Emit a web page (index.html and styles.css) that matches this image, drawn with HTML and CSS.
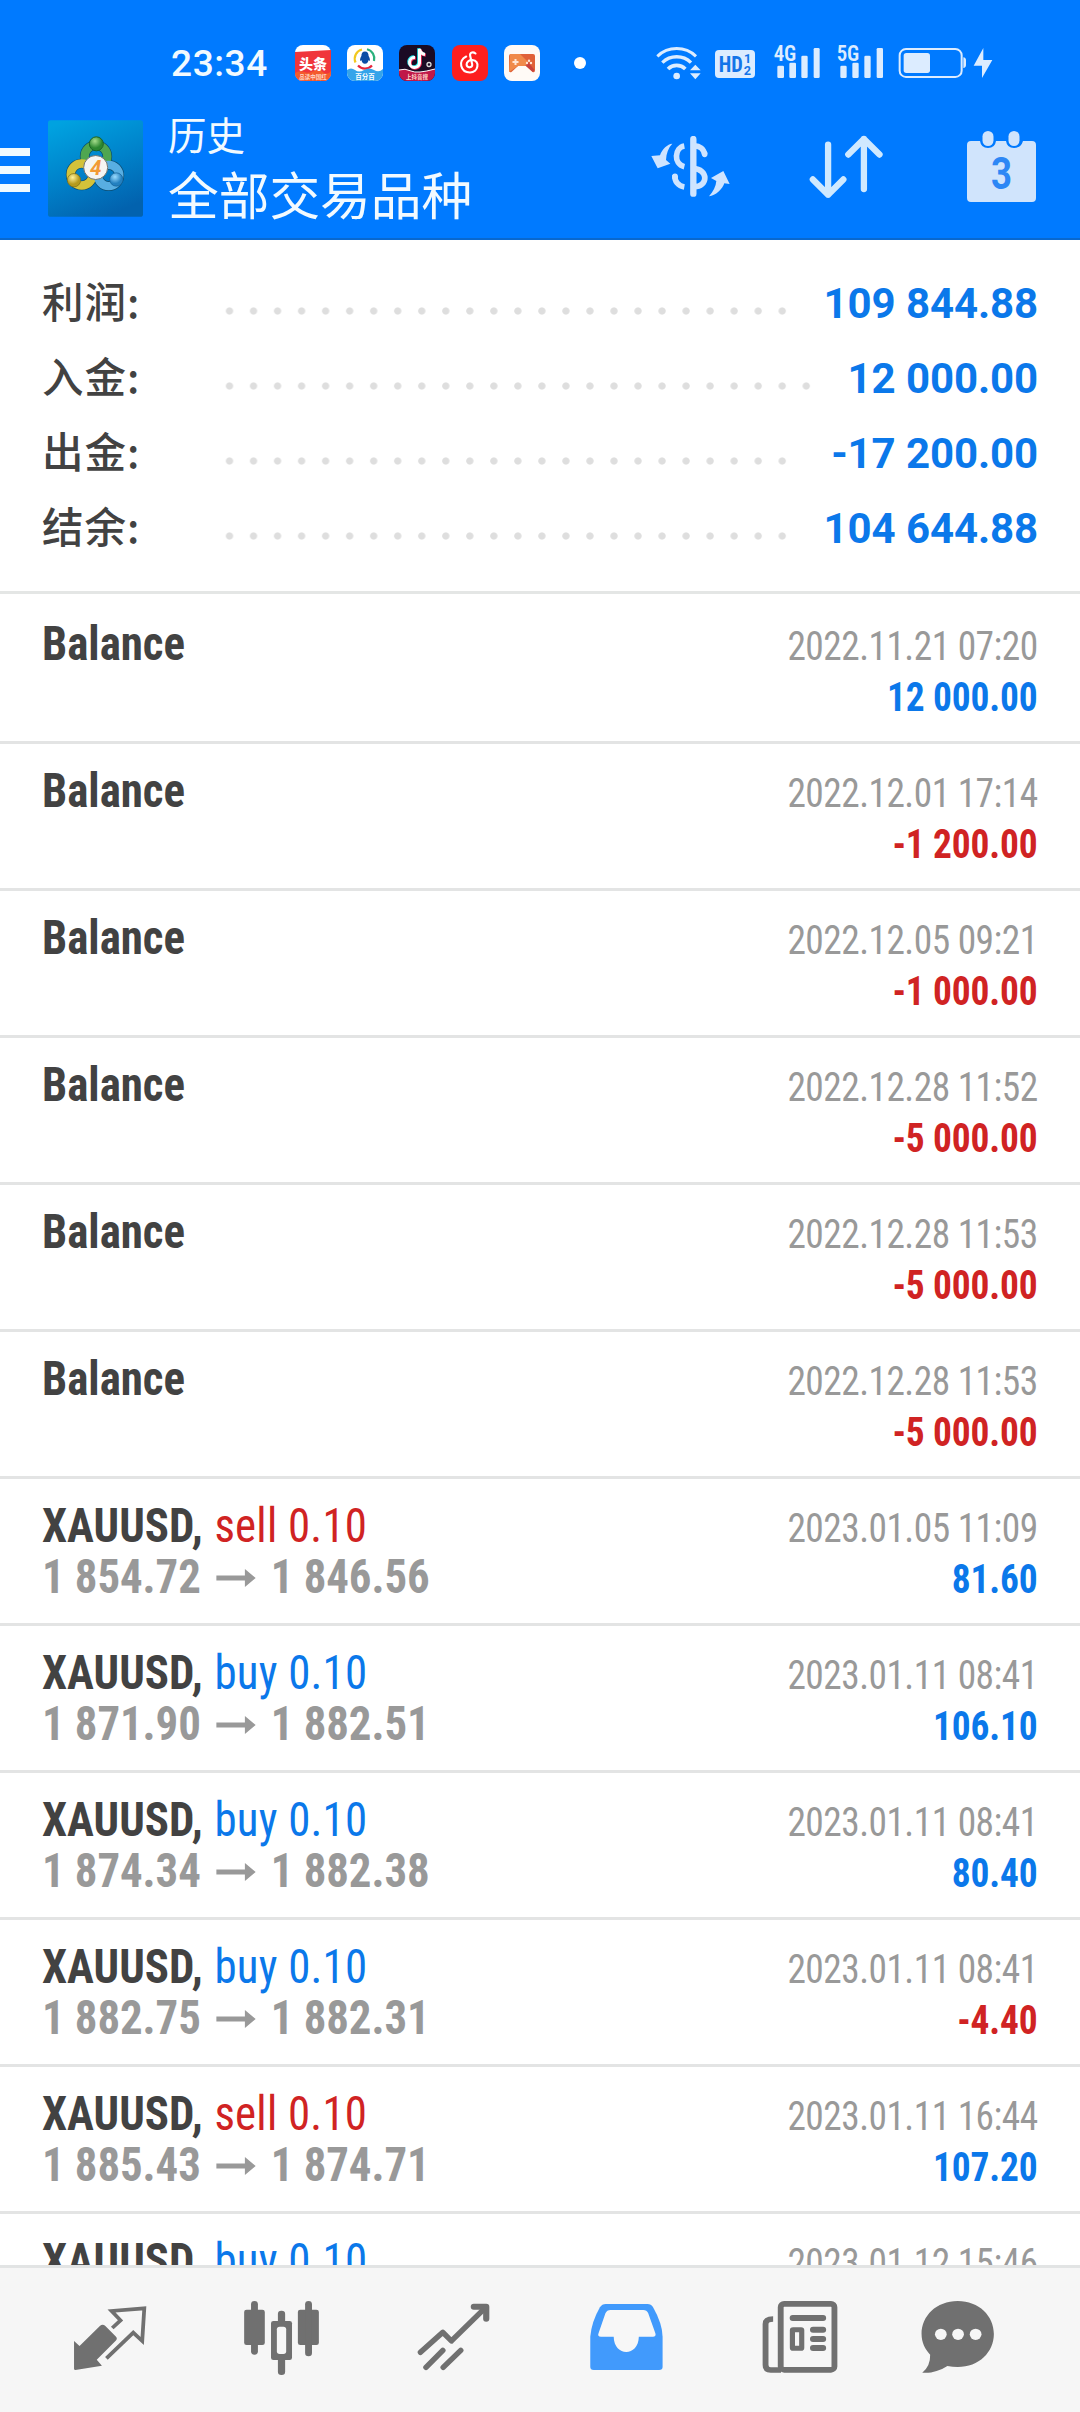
FILE: index.html
```html
<!DOCTYPE html>
<html lang="zh-CN">
<head>
<meta charset="utf-8">
<title>历史</title>
<link rel="stylesheet" href="styles.css">
</head>
<body>
<svg class="defs" aria-hidden="true">
  <symbol id="arrow" viewBox="0 0 42 18"><path d="M0 6.5H30.5V0L42 9 30.500 18V11.500H0z" fill="currentColor"/></symbol>
</svg>
<div class="screen">
  <header class="header">
    <div class="status">
      <span class="clock">23:34</span>
      <div class="apps">
        <svg width="36" height="36" viewBox="0 0 36 36"><rect width="36" height="36" rx="8" fill="#fff"/><path d="M0 7 36 5V28a8 8 0 0 1-8 8H8a8 8 0 0 1-8-8z" fill="#f0353b"/><path d="M0 28Q4 25 9 27T19 26 28 27 36 26V28a8 8 0 0 1-8 8H8a8 8 0 0 1-8-8z" fill="#f45a2c"/><text x="18" y="24" class="app-big">头条</text><text x="18" y="34" class="app-tiny">品读中国红</text></svg>
        <svg width="36" height="36" viewBox="0 0 36 36"><rect width="36" height="36" rx="8" fill="#fff"/><g fill="none" stroke-width="2.200"><path d="M8.500 17.500A9.500 9.500 0 0 1 15 4.500" stroke="#f2c81e"/><path d="M20 4.300A9.500 9.500 0 0 1 27 16" stroke="#2bb17d"/><path d="M11 20.500A9.500 9.500 0 0 0 25 20.500" stroke="#e5263b"/></g><path d="M18 6.500c2.600 0 3.600 2 3.600 4.500 1 1.700 1.800 4 1 5l-1.200-.8c-.3 2-1.300 3.600-3.400 3.600s-3.100-1.600-3.400-3.600l-1.200.8c-.8-1 0-3.300 1-5 0-2.500 1-4.500 3.600-4.500z" fill="#0a4da5"/><path d="M0 25q4-3 8 0t9 0 10 0 9-1v4a8 8 0 0 1-8 8H8a8 8 0 0 1-8-8z" fill="#35a4ea"/><text x="18" y="34" class="app-tiny app-tiny--l">百分百</text></svg>
        <svg width="36" height="36" viewBox="0 0 36 36"><rect width="36" height="36" rx="8" fill="#1b0b24"/><path d="M0 25q6-2 12 1t24-2v4a8 8 0 0 1-8 8H8a8 8 0 0 1-8-8z" fill="#c01848"/><path d="M0 25q6-2 12 1t24-2" fill="none" stroke="#fff"/><g fill="none" stroke-width="3"><path d="M16 12.500a5 5 0 1 0 4.500 5.500V4c.5 3.500 2.500 5 5.500 5.500" stroke="#27e5e8" transform="translate(-.8 -.8)"/><path d="M16 12.500a5 5 0 1 0 4.500 5.500V4c.5 3.500 2.500 5 5.500 5.500" stroke="#f52a5a" transform="translate(.8 .8)"/><path d="M16 12.500a5 5 0 1 0 4.500 5.500V4c.5 3.500 2.500 5 5.500 5.500" stroke="#fff"/></g><circle cx="30" cy="19.500" r="2" fill="none" stroke="#ddd" stroke-width="1.300"/><text x="18" y="34" class="app-tiny">上抖音搜</text></svg>
        <svg width="36" height="36" viewBox="0 0 36 36"><rect width="36" height="36" rx="8" fill="#fd1f1e"/><path d="M23.500 8.500c-3-2.500-6-.5-5.300 2.500l2 8.300c.6 4-5.400 4-5.600.2-.1-3 3-4.700 5.800-4.500 8 .6 6 12.500-2.400 12.500-9.500 0-12.500-12-3.800-16" fill="none" stroke="#fff" stroke-width="2.100" stroke-linecap="round"/></svg>
        <svg width="36" height="36" viewBox="0 0 36 36"><rect width="36" height="36" rx="8" fill="#fffaf6"/><path d="M7 9H29q2 0 2 2V25q0 3-2.500 2L22 21H14L7.500 27Q5 28 5 25V11q0-2 2-2z" fill="#e06038"/><path d="M6 9H16l8 8-3 4h-7L5 27z" fill="#f08a4a"/><path d="M24 17 30.500 25 29 27 22 21z" fill="#c8413e"/><g fill="#ffe5d4"><path d="M10.500 14h2v2h2v2h-2v2h-2v-2h-2v-2h2z"/><circle cx="23" cy="18" r="1.200"/><circle cx="27" cy="18" r="1.200"/><circle cx="25" cy="15.800" r="1.200"/></g></svg>
      </div>
      <span class="more"></span>
      <svg class="signals" width="338" height="36" viewBox="48 27 1014 108">
        <g fill="none" stroke="#dcecff" stroke-width="9"><path d="M52 61a84 84 0 0 1 116 0"/><path d="M67 80a61 61 0 0 1 86 0" stroke-width="10"/><path d="M84 99a37 37 0 0 1 52 0" stroke-width="11"/></g>
        <g fill="#dcecff"><circle cx="110" cy="120" r="10"/><path d="M150 103 166 86 182 103zM150 112H182L166 130z"/>
        <rect x="225" y="42" width="120" height="84" rx="12"/>
        <rect x="412" y="89" width="20" height="37" rx="4"/><rect x="448" y="80" width="20" height="46" rx="4"/><rect x="484" y="59" width="19" height="67" rx="4"/><rect x="521" y="36" width="18" height="90" rx="4"/>
        <rect x="601" y="89" width="19" height="37" rx="4"/><rect x="637" y="80" width="19" height="46" rx="4"/><rect x="673" y="59" width="19" height="67" rx="4"/><rect x="710" y="36" width="19" height="90" rx="4"/>
        <rect x="791" y="51" width="79" height="60" rx="8"/><path d="M970 64q8 1 8 9v14q0 8-8 9zM1030 36 1001 89H1026V126L1057 72H1030z"/></g>
        <rect x="779" y="39" width="186" height="84" rx="19" fill="none" stroke="#dcecff" stroke-width="6"/>
        <text x="236" y="107" class="hd" textLength="72" lengthAdjust="spacingAndGlyphs">HD</text>
        <text x="312" y="80" class="hd-n">1</text><text x="311" y="116" class="hd-n">2</text>
        <text x="401" y="76" class="net" textLength="68" lengthAdjust="spacingAndGlyphs">4G</text>
        <text x="590" y="76" class="net" textLength="68" lengthAdjust="spacingAndGlyphs">5G</text>
      </svg>
    </div>
    <div class="titlebar">
      <svg class="menu" width="30" height="44" viewBox="0 0 30 44" fill="#f0faff"><path d="M0 0H30V8H0zM0 18H30V26H0zM0 36H30V44H0z"/></svg>
      <svg class="logo" width="95" height="97" viewBox="25 30 285 290">
        <defs>
          <linearGradient id="sky" x1=".2" y1="0" x2=".6" y2="1"><stop offset="0" stop-color="#00a2e0"/><stop offset=".5" stop-color="#0083cb"/><stop offset="1" stop-color="#0262ae"/></linearGradient>
          <radialGradient id="green" cx=".4" cy=".3"><stop offset="0" stop-color="#a5dd8b"/><stop offset="1" stop-color="#2c8730"/></radialGradient>
          <radialGradient id="gold" cx=".4" cy=".3"><stop offset="0" stop-color="#fff29b"/><stop offset="1" stop-color="#b59a1d"/></radialGradient>
          <radialGradient id="blue" cx=".4" cy=".3"><stop offset="0" stop-color="#9bdcff"/><stop offset="1" stop-color="#2380c0"/></radialGradient>
        </defs>
        <rect x="25" y="30" width="285" height="290" rx="8" fill="url(#sky)"/>
        <g fill="none" stroke="#0a4a6e" stroke-width="29"><circle cx="169" cy="139" r="34"/><circle cx="126" cy="193" r="33"/><circle cx="207" cy="196" r="32"/></g>
        <g fill="none" stroke-width="25"><circle cx="169" cy="139" r="34" stroke="#4fa650"/><circle cx="126" cy="193" r="33" stroke="#d3c23a"/><circle cx="207" cy="196" r="32" stroke="#58aee2"/></g>
        <circle cx="170" cy="101" r="21" fill="url(#green)" stroke="#1d6427" stroke-width="3"/><circle cx="103" cy="210" r="20" fill="url(#gold)" stroke="#786a18" stroke-width="2"/><circle cx="230" cy="208" r="20" fill="url(#blue)" stroke="#145d92" stroke-width="2"/>
        <circle cx="168" cy="172" r="36" fill="#f5f5f3" stroke="#71746e" stroke-width="3"/>
        <text x="168" y="194" class="logo-n">4</text>
      </svg>
      <div class="titles"><span class="title-s">历史</span><span class="title-l">全部交易品种</span></div>
      <svg class="act-dollar" width="79" height="61" viewBox="32 299 237 183">
        <g fill="#cfe4ff"><path d="M96 322C82 323 65 338 59 357L33 359 52 396 90 382 77 371C78 351 84 334 96 322z"/><path d="M206 480C218 466 227 450 228 434L212 425 249 404 268 443 252 441C246 459 226 478 206 480z"/></g>
        <g fill="none" stroke="#cfe4ff" stroke-width="17"><path d="M132 329C103 334 98 383 132 391M104 417C102 435 114 449 132 452"/><path d="M159 329C178 327 190 338 193 354M159 397C204 397 206 453 159 451" /><path d="M159 308V472" stroke-width="19" stroke-linecap="round"/><path d="M104 420v3M193 352v2" stroke-linecap="round"/></g>
      </svg>
      <svg class="act-sort" width="74" height="64" viewBox="507 298 222 193" fill="none" stroke="#cfe9ff" stroke-width="19" stroke-linecap="round" stroke-linejoin="round"><path d="M564 327V478M518 432 564 478 610 432M672 461V310M625 357 672 310 719 357"/></svg>
      <svg class="act-cal" width="69" height="72" viewBox="0 0 69 72">
        <path d="M4 10H13Q14 17 21 17T29 10H39Q40 17 47 17T56 10H65Q69 10 69 14V67Q69 71 65 71H4Q0 71 0 67V14Q0 10 4 10z" fill="#d0e4fc"/><rect x="15.500" y="0" width="11" height="15" rx="5.500" fill="#d0e4fc"/><rect x="41.500" y="0" width="11" height="15" rx="5.500" fill="#d0e4fc"/>
        <text x="34.500" y="58" class="cal-n" textLength="21" lengthAdjust="spacingAndGlyphs">3</text>
      </svg>
    </div>
  </header>

  <section class="summary">
    <div class="sum"><span class="sum-k">利润:</span><i class="leader"></i><b>109 844.88</b></div>
    <div class="sum"><span class="sum-k">入金:</span><i class="leader"></i><b>12 000.00</b></div>
    <div class="sum"><span class="sum-k">出金:</span><i class="leader"></i><b>-17 200.00</b></div>
    <div class="sum"><span class="sum-k">结余:</span><i class="leader"></i><b>104 644.88</b></div>
  </section>

  <main class="list">
    <article class="row"><div class="left"><p><b>Balance</b></p></div><div class="right"><p class="date">2022.11.21 07:20</p><p class="amt up">12 000.00</p></div></article>
    <article class="row"><div class="left"><p><b>Balance</b></p></div><div class="right"><p class="date">2022.12.01 17:14</p><p class="amt down">-1 200.00</p></div></article>
    <article class="row"><div class="left"><p><b>Balance</b></p></div><div class="right"><p class="date">2022.12.05 09:21</p><p class="amt down">-1 000.00</p></div></article>
    <article class="row"><div class="left"><p><b>Balance</b></p></div><div class="right"><p class="date">2022.12.28 11:52</p><p class="amt down">-5 000.00</p></div></article>
    <article class="row"><div class="left"><p><b>Balance</b></p></div><div class="right"><p class="date">2022.12.28 11:53</p><p class="amt down">-5 000.00</p></div></article>
    <article class="row"><div class="left"><p><b>Balance</b></p></div><div class="right"><p class="date">2022.12.28 11:53</p><p class="amt down">-5 000.00</p></div></article>
    <article class="row"><div class="left"><p><b>XAUUSD,</b> <span class="side down">sell 0.10</span></p><p class="px">1 854.72<svg class="arrow"><use href="#arrow"/></svg>1 846.56</p></div><div class="right"><p class="date">2023.01.05 11:09</p><p class="amt up">81.60</p></div></article>
    <article class="row"><div class="left"><p><b>XAUUSD,</b> <span class="side up">buy 0.10</span></p><p class="px">1 871.90<svg class="arrow"><use href="#arrow"/></svg>1 882.51</p></div><div class="right"><p class="date">2023.01.11 08:41</p><p class="amt up">106.10</p></div></article>
    <article class="row"><div class="left"><p><b>XAUUSD,</b> <span class="side up">buy 0.10</span></p><p class="px">1 874.34<svg class="arrow"><use href="#arrow"/></svg>1 882.38</p></div><div class="right"><p class="date">2023.01.11 08:41</p><p class="amt up">80.40</p></div></article>
    <article class="row"><div class="left"><p><b>XAUUSD,</b> <span class="side up">buy 0.10</span></p><p class="px">1 882.75<svg class="arrow"><use href="#arrow"/></svg>1 882.31</p></div><div class="right"><p class="date">2023.01.11 08:41</p><p class="amt down">-4.40</p></div></article>
    <article class="row"><div class="left"><p><b>XAUUSD,</b> <span class="side down">sell 0.10</span></p><p class="px">1 885.43<svg class="arrow"><use href="#arrow"/></svg>1 874.71</p></div><div class="right"><p class="date">2023.01.11 16:44</p><p class="amt up">107.20</p></div></article>
    <article class="row"><div class="left"><p><b>XAUUSD,</b> <span class="side up">buy 0.10</span></p></div><div class="right"><p class="date">2023.01.12 15:46</p></div></article>
  </main>

  <nav class="nav">
    <svg viewBox="0 0 172 144"><g transform="translate(-24 -78) scale(.34436 .33333)"><path d="M215 453 231 468 290 408Q298 400 306 408L337 440Q342 446 336 452L281 509 296 527 219 540Q215 540 215 536z" fill="#707070"/><path d="M326 414 350 391 324 363 419 355 413 453 387 428 309 505" fill="none" stroke="#707070" stroke-width="11"/></g></svg>
    <svg viewBox="0 0 172 144"><g transform="translate(-196 -78) scale(.34436 .33333)" fill="#707070"><rect x="709" y="359" width="60" height="106" rx="7"/><rect x="729" y="333" width="20" height="161" rx="10"/><rect x="865" y="359" width="61" height="106" rx="7"/><rect x="886" y="333" width="20" height="166" rx="10"/><rect x="807" y="362" width="21" height="193" rx="10"/><rect x="787" y="393" width="61" height="117" rx="7"/><rect x="804" y="410" width="27" height="82" rx="8" fill="#f6f6f6"/></g></svg>
    <svg viewBox="0 0 172 144"><g transform="translate(-368 -78) scale(.34436 .33333)" fill="none" stroke="#707070" stroke-width="16" stroke-linecap="round" stroke-linejoin="round"><path d="M1221 487 1286 427 1311 453 1409 354"/><path d="M1376 350H1412V386" stroke-width="18"/><path d="M1237 532 1286 481M1287 532 1338 481"/></g></svg>
    <svg viewBox="0 0 172 144"><g transform="translate(0 -78) scale(.34436 .33333)"><path d="M191 342H312Q323 342 328 351 355 400 356 440V530Q356 540 346 540H156Q146 540 146 530V440Q150 395 174 352 180 342 191 342z" fill="#419afc"/><path d="M205 360H300Q310 360 314 369L335 430Q338 440 328 440H287C286 501 215 501 214 440H177Q166 440 170 430L190 370Q194 360 205 360z" fill="#f7f7f7"/></g></svg>
    <svg viewBox="0 0 172 144"><g transform="translate(-172 -78) scale(.34436 .33333)" fill="none" stroke="#707070" stroke-width="17"><rect x="699" y="341.500" width="156" height="198" rx="10"/><path d="M700 540H670Q655 540 655 525V402Q655 387 677 387"/><path d="M734 384H822M793 419.500H822M793 447H822M793 474H822" stroke-linecap="round" stroke-width="18"/><rect x="733" y="419" width="27" height="56" rx="2" stroke-width="15"/></g></svg>
    <svg viewBox="0 0 172 144"><g transform="translate(-344 -78) scale(.34436 .33333)" fill="#707070"><path d="M1213 333C1275 333 1318 378 1318 432S1275 531 1213 531Q1198 531 1183 528C1160 543 1133 551 1110 548Q1134 528 1133 494C1118 478 1108 457 1108 432 1108 378 1151 333 1213 333z"/><g fill="#f6f6f6"><circle cx="1164" cy="433" r="17"/><circle cx="1214" cy="433" r="17"/><circle cx="1265" cy="433" r="17"/></g></g></svg>
  </nav>
</div>
</body>
</html>
```
FILE: styles.css
```css
* { box-sizing: border-box; margin: 0; padding: 0; }
body { background: #fff; font-family: Roboto, "Noto Sans CJK SC", sans-serif; color: #424242; }
svg { display: block; flex: none; }
.defs { display: none; }
.screen { width: 1080px; height: 2412px; display: flex; flex-direction: column; overflow: hidden; }

.header { flex: none; height: 240px; background: #007aff; border-bottom: 2px solid #0968ce; padding-top: 38px; }
.status { display: flex; align-items: center; height: 50px; padding-left: 171px; }
.clock { width: 124px; color: #f2faff; font-size: 37px; font-weight: 500; letter-spacing: 0.6px; line-height: 52px; padding-top: 2px; }
.apps { display: flex; gap: 16.2px; }
.more { width: 12px; height: 12px; border-radius: 50%; background: #fff; margin-left: 34px; }
.signals { margin-left: 70px; overflow: visible; }
.app-big { font: 900 14px "Noto Sans CJK SC", sans-serif; fill: #fff; text-anchor: middle; }
.app-tiny { font: 700 5.5px "Noto Sans CJK SC", sans-serif; fill: #ffd9c8; text-anchor: middle; }
.app-tiny--l { font-size: 6.5px; fill: #fff; }
.hd { font: 700 66px "Roboto Condensed", sans-serif; fill: #1474e8; }
.hd-n { font: 700 38px Roboto, sans-serif; fill: #1474e8; }
.net { font: 600 64px "Roboto Condensed", sans-serif; fill: #dcecff; }

.titlebar { display: flex; align-items: flex-start; height: 150px; }
.menu { margin-top: 60px; }
.logo { margin: 32px 0 0 18px; }
.logo-n { font: italic 700 62px Roboto, sans-serif; fill: #f29a35; text-anchor: middle; }
.titles { display: flex; flex-direction: column; margin-left: 25px; width: 483px; padding-top: 18px; color: #f2faff; font-family: "Noto Sans CJK SC", sans-serif; font-weight: 400; }
.title-s { font-size: 38.5px; line-height: 54px; }
.title-l { font-size: 50.7px; line-height: 66px; }
.act-dollar { margin-top: 48px; }
.act-sort { margin: 47px 0 0 79px; }
.act-cal { margin: 43px 0 0 84px; }
.cal-n { font: 700 45px Roboto, sans-serif; fill: #2d87f5; text-anchor: middle; }

.summary { flex: none; height: 354px; padding: 26px 42px 0 42px; border-bottom: 3px solid #e4e6e5; }
.sum { display: flex; align-items: center; height: 75px; }
.sum-k { width: 176px; height: 75px; font-size: 41.5px; letter-spacing: 1px; font-weight: 500; line-height: 69px; font-family: "Noto Sans CJK SC", sans-serif; }
.leader { flex: 1; height: 8px; margin: 15px 32px 0 0; background: radial-gradient(circle at 11.5px 4px, #dedede 3.2px, transparent 4px) 0 0 / 24.04px 8px repeat-x; }
.sum b { font-size: 42px; font-weight: 700; color: #0b78ea; line-height: 75px; letter-spacing: -0.1px; }

.list { flex: 1; min-height: 0; overflow: hidden; padding-top: 3px; font-family: "Roboto Condensed", Roboto, sans-serif; }
.row { display: flex; justify-content: space-between; height: 147px; padding: 0 42px; border-bottom: 3px solid #e3e4e4; white-space: nowrap; }
.left { padding-top: 21px; font-size: 48px; line-height: 51px; transform: scaleX(0.935); transform-origin: left; }
.right { padding-top: 24px; font-size: 40px; line-height: 51px; text-align: right; transform: scaleX(0.935); transform-origin: right; }
.date { color: #999; letter-spacing: -0.56px; }
.amt { font-weight: 700; letter-spacing: -0.15px; }
.side { margin-left: 1.5px; letter-spacing: 0.25px; }
.up { color: #0b78ea; }
.down { color: #d02323; }
.px { display: flex; align-items: center; font-weight: 700; color: #999; letter-spacing: -0.1px; }
.arrow { width: 45px; height: 18px; margin: 2px 15px 0; }

.nav { flex: none; height: 147px; border-top: 3px solid #e2e4e4; background: #f6f6f6; padding: 0 24px; display: grid; grid-template-columns: repeat(6, 172px); }
.nav svg { width: 172px; height: 144px; }
```
